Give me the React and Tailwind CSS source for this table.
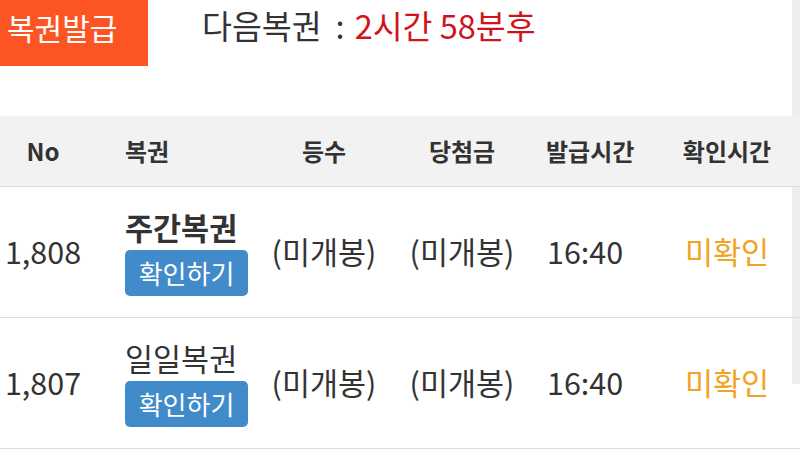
const rows = [
  { no: "1,808", name: "주간복권", bold: true, rank: "(미개봉)", prize: "(미개봉)", issued: "16:40", checked: "미확인" },
  { no: "1,807", name: "일일복권", bold: false, rank: "(미개봉)", prize: "(미개봉)", issued: "16:40", checked: "미확인" },
];

const cols = "grid grid-cols-[86px_172px_132px_144px_120px_146px]";

export default function App() {
  return (
    <div
      className="relative w-[800px] h-[454px] overflow-hidden bg-white text-[#333]"
      style={{ fontFamily: '"Noto Sans CJK KR", "Noto Sans", sans-serif' }}
    >
      {/* scrollbar track */}
      <div className="absolute right-0 top-0 w-2 h-[384px] bg-[#eeeeee]" />

      <div className="relative z-10">
        <div className="flex h-[116px] items-start">
          <button className="w-[148px] h-[66px] bg-[#fd5424] text-white text-[30px] leading-none flex items-center pl-[7px] pb-[13px]">
            복권발급
          </button>
          <div className="ml-[54px] h-[50px] flex items-center text-[32.5px] leading-none">
            <span className="text-[#333]">다음복권</span>
            <span className="text-[#333] ml-[14px] mr-[10px]">:</span>
            <span className="text-[#d1141b]">2시간 58분후</span>
          </div>
        </div>

        <div className={`${cols} h-[71px] bg-[#f2f2f2] border-b border-[#dcdcdc] items-center text-[24px] font-bold text-[#333]`}>
          <div className="text-center">No</div>
          <div className="pl-[39px]">복권</div>
          <div className="text-center">등수</div>
          <div className="text-center">당첨금</div>
          <div className="pl-[12px]">발급시간</div>
          <div className="text-center">확인시간</div>
        </div>

        {rows.map((r) => (
          <div key={r.no} className={`${cols} h-[131px] border-b border-[#dcdcdc] items-center text-[30.5px]`}>
            <div className="text-center">{r.no}</div>
            <div className="pl-[39px] flex flex-col items-start">
              <div className={`leading-[36px] ${r.bold ? "font-bold" : ""}`}>{r.name}</div>
              <button className="mt-[5px] w-[123px] h-[46px] rounded-[5px] bg-[#428bca] text-white text-[26px] leading-none">
                확인하기
              </button>
            </div>
            <div className="text-center">{r.rank}</div>
            <div className="text-center">{r.prize}</div>
            <div className="pl-[13px]">{r.issued}</div>
            <div className="text-center text-[#f0a421]">{r.checked}</div>
          </div>
        ))}
      </div>
    </div>
  );
}
